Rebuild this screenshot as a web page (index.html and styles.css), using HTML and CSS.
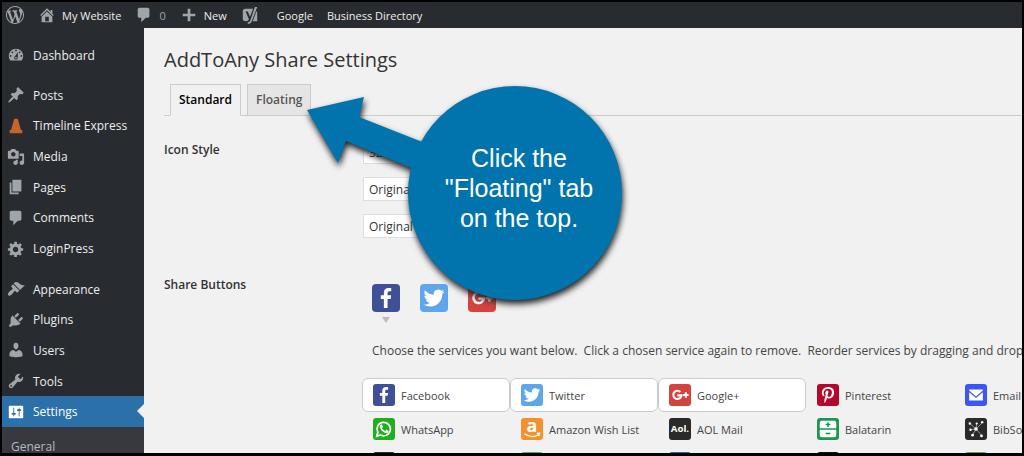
FILE: index.html
```html
<!DOCTYPE html>
<html lang="en">
<head>
  <meta charset="UTF-8" />
  <meta name="viewport" content="width=device-width, initial-scale=1.0" />
  <title>AddToAny Share Settings</title>
  <link rel="stylesheet" href="styles.css">
</head>
<body>
  <svg class="defs" aria-hidden="true">
    <symbol id="comment" viewBox="0 0 20 20"><path d="M5 2h9c1.1 0 2 .9 2 2v7c0 1.1-.9 2-2 2h-2l-5 5v-5H5c-1.1 0-2-.9-2-2V4c0-1.1.9-2 2-2z"/></symbol>
    <symbol id="facebook" viewBox="0 0 32 32"><path fill="#fff" d="M17.78 27.5V17.008h3.522l.527-4.09h-4.05v-2.61c0-1.182.33-1.99 2.023-1.99h2.166V4.66c-.375-.05-1.66-.16-3.155-.16-3.123 0-5.26 1.905-5.26 5.405v3.016h-3.53v4.09h3.53V27.5h4.223z"/></symbol>
    <symbol id="twitter" viewBox="0 0 32 32"><path fill="#fff" d="M28 8.557a9.913 9.913 0 01-2.828.775 4.93 4.93 0 002.166-2.725 9.738 9.738 0 01-3.13 1.194 4.92 4.92 0 00-3.593-1.55 4.924 4.924 0 00-4.794 6.049c-4.09-.21-7.72-2.17-10.15-5.15a4.942 4.942 0 00-.665 2.477c0 1.71.87 3.214 2.19 4.1a4.968 4.968 0 01-2.23-.616v.06c0 2.39 1.7 4.38 3.952 4.83-.414.115-.85.174-1.297.174-.318 0-.626-.03-.928-.086a4.935 4.935 0 004.6 3.42 9.893 9.893 0 01-6.114 2.107c-.398 0-.79-.023-1.175-.068a13.953 13.953 0 007.55 2.213c9.056 0 14.01-7.507 14.01-14.013 0-.213-.005-.426-.015-.637.96-.695 1.795-1.56 2.455-2.55z"/></symbol>
    <symbol id="gplus" viewBox="0 0 32 32"><path fill="none" stroke="#fff" stroke-width="3" d="M16.5 11.5a6 6 0 1 0 1.7 5H12M24.5 12v8M20.5 16h8"/></symbol>
  </svg>

  <header class="adminbar">
    <a href="#" class="bar-item logo" aria-label="WordPress"><svg viewBox="0 0 20 20"><path d="M20 10c0-5.51-4.49-10-10-10C4.48 0 0 4.49 0 10c0 5.52 4.48 10 10 10 5.51 0 10-4.48 10-10zM7.78 15.37L4.37 6.22c.55-.02 1.17-.08 1.17-.08.5-.06.44-1.13-.06-1.11 0 0-1.45.11-2.37.11-.18 0-.37 0-.58-.01C4.12 2.69 6.87 1.11 10 1.11c2.33 0 4.45.87 6.05 2.34-.68-.11-1.65.39-1.65 1.58 0 .74.45 1.36.9 2.1.35.61.55 1.36.55 2.46 0 1.49-1.4 5-1.4 5l-3.03-8.37c.54-.02.82-.17.82-.17.5-.05.44-1.25-.06-1.22 0 0-1.44.12-2.38.12-.87 0-2.33-.12-2.33-.12-.5-.03-.56 1.2-.06 1.22l.92.08 1.26 3.41zM17.41 10c.24-.64.74-1.87.43-4.25.7 1.29 1.05 2.71 1.05 4.25 0 3.29-1.73 6.24-4.4 7.78.97-2.59 1.94-5.2 2.92-7.78zM6.1 18.09C3.12 16.65 1.11 13.53 1.11 10c0-1.3.23-2.48.72-3.59C3.25 10.3 4.67 14.2 6.1 18.09zm4.03-6.63l2.58 6.98c-.86.29-1.76.45-2.71.45-.79 0-1.57-.11-2.29-.33.81-2.38 1.62-4.74 2.42-7.1z"/></svg></a>
    <a href="#" class="bar-item site"><svg viewBox="0 0 20 20"><path d="M16 8.5l1.53 1.53-1.06 1.06L10 4.6l-6.47 6.49-1.06-1.06L10 2.5l4 4v-2h2v4zm-6-2.46l6 5.99V18H4v-5.97zM12 17v-5H8v5h4z"/></svg>My Website</a>
    <a href="#" class="bar-item count"><svg><use href="#comment"/></svg>0</a>
    <a href="#" class="bar-item new"><svg viewBox="0 0 20 20"><path d="M8.5 3h3v5.5H17v3h-5.500V17h-3v-5.500H3v-3h5.500z"/></svg>New</a>
    <a href="#" class="bar-item yoast" aria-label="SEO"><svg viewBox="0 0 20 20"><path d="M5 3h8.500L10 12 7.500 6H5l3.800 8.500C8.300 16 7.500 17 5.500 17H5a3 3 0 0 1-3-3V6a3 3 0 0 1 3-3zM15.500 1H18L12 17c-.8 1.900-2.200 3-4.500 3v-2c1.500 0 2.200-.6 2.800-2zM17.300 5.500c.5.500.7 1.200.7 2V17h-5z"/></svg></a>
    <a href="#" class="bar-item">Google</a>
    <a href="#" class="bar-item">Business Directory</a>
  </header>

  <div class="wrap">
    <nav class="menu">
      <ul>
        <li><a href="#"><svg viewBox="0 0 20 20"><path fill-rule="evenodd" d="M3.76 16h12.48c1.100-1.370 1.760-3.110 1.760-5 0-4.420-3.580-8-8-8s-8 3.580-8 8c0 1.890.66 3.630 1.760 5zM10 4c.55 0 1 .45 1 1s-.45 1-1 1-1-.45-1-1 .45-1 1-1zM6 6c.55 0 1 .45 1 1s-.45 1-1 1-1-.45-1-1 .45-1 1-1zm8 0c.55 0 1 .45 1 1s-.45 1-1 1-1-.45-1-1 .45-1 1-1zm-5.370 5.550L12 7v6c0 1.100-.9 2-2 2s-2-.9-2-2c0-.57.24-1.080.63-1.450zM4 10c.55 0 1 .45 1 1s-.45 1-1 1-1-.45-1-1 .45-1 1-1zm12 0c.55 0 1 .45 1 1s-.45 1-1 1-1-.45-1-1 .45-1 1-1zm-5 3c0-.55-.45-1-1-1s-1 .45-1 1 .45 1 1 1 1-.45 1-1z"/></svg>Dashboard</a></li>
      </ul>
      <ul class="content-group">
        <li><a href="#"><svg viewBox="0 0 20 20"><path d="M10.440 3.020l1.820-1.820 6.360 6.350-1.830 1.820c-1.050-.68-2.480-.57-3.410.36l-.75.75c-.92.93-1.040 2.350-.35 3.410l-1.830 1.820-2.410-2.410-2.800 2.790c-.42.42-3.380 2.710-3.800 2.290s1.860-3.390 2.280-3.810l2.790-2.790L4.100 9.360l1.830-1.820c1.050.69 2.480.57 3.400-.36l.75-.75c.93-.92 1.050-2.350.36-3.410z"/></svg>Posts</a></li>
        <li><a href="#"><svg viewBox="0 0 20 20"><path fill="#c4662c" d="M8 2h4l3.500 12.500H17V18H3v-3.500h1.500z"/></svg>Timeline Express</a></li>
        <li><a href="#"><svg viewBox="0 0 20 20"><path fill-rule="evenodd" d="M13 11V4c0-.55-.45-1-1-1h-1.670L9 1H5L3.670 3H2c-.55 0-1 .45-1 1v7c0 .55.45 1 1 1h10c.55 0 1-.45 1-1zM7 4.500c1.380 0 2.500 1.120 2.500 2.500S8.380 9.500 7 9.500 4.500 8.380 4.500 7 5.620 4.500 7 4.500zM14 6h5v10.500c0 1.380-1.120 2.500-2.500 2.500S14 17.880 14 16.500s1.120-2.500 2.500-2.500c.17 0 .34.02.5.05V9h-3V6zm-4 8.050V13h2v3.500c0 1.380-1.120 2.500-2.500 2.500S7 17.880 7 16.500 8.120 14 9.500 14c.17 0 .34.02.5.05z"/></svg>Media</a></li>
        <li><a href="#"><svg viewBox="0 0 20 20"><path d="M6 15V2h10v13H6zm-1 1h8v2H3V5h2v11z"/></svg>Pages</a></li>
        <li><a href="#"><svg><use href="#comment"/></svg>Comments</a></li>
        <li><a href="#"><svg viewBox="0 0 20 20"><path fill-rule="evenodd" d="M18 12h-2.180c-.17.7-.44 1.350-.81 1.930l1.540 1.540-2.100 2.100-1.540-1.540c-.58.36-1.230.63-1.910.79V19H8v-2.180c-.68-.16-1.330-.43-1.910-.79l-1.540 1.540-2.120-2.120 1.540-1.540c-.36-.58-.63-1.230-.79-1.910H1V9.030h2.170c.16-.7.44-1.350.8-1.940L2.430 5.550l2.100-2.100 1.540 1.540c.58-.37 1.240-.64 1.930-.81V2h3v2.180c.68.16 1.330.43 1.910.79l1.540-1.540 2.120 2.120-1.540 1.540c.36.59.64 1.240.8 1.940H18V12zm-8.500 1.500c1.660 0 3-1.340 3-3s-1.340-3-3-3-3 1.340-3 3 1.340 3 3 3z"/></svg>LoginPress</a></li>
      </ul>
      <ul class="admin-group">
        <li><a href="#"><svg viewBox="0 0 20 20"><path d="M14.480 11.060L7.410 3.990l1.500-1.500c.5-.56 2.300-.47 3.510.32 1.210.8 1.430 1.280 2.910 2.100 1.180.64 2.450 1.260 4.450.85zm-.71.71L6.700 4.700 4.930 6.470c-.39.39-.39 1.020 0 1.410l1.060 1.060c.39.39.39 1.030 0 1.420-.6.6-1.430 1.110-2.210 1.690-.35.26-.7.53-1.010.84C1.430 14.230.4 16.080 1.400 17.070c.99 1 2.840-.03 4.180-1.360.31-.31.58-.66.85-1.020.57-.78 1.080-1.610 1.690-2.210.39-.39 1.020-.39 1.410 0l1.060 1.060c.39.39 1.020.39 1.410 0z"/></svg>Appearance</a></li>
        <li><a href="#"><svg viewBox="0 0 20 20"><path d="M13.110 4.360L9.870 7.600 8 5.730l3.240-3.240c.35-.34 1.050-.2 1.560.32.52.51.66 1.210.31 1.550zm-8 1.770l.91-1.120 9.010 9.010-1.190.84c-.71.71-2.630 1.160-3.820 1.160H6.140L4.900 17.260c-.59.59-1.540.59-2.120 0-.59-.58-.59-1.530 0-2.120l1.240-1.240v-3.880c0-1.130.4-3.190 1.090-3.890zm7.260 3.970l3.240-3.240c.34-.35 1.040-.21 1.550.31.52.51.66 1.210.31 1.550l-3.240 3.250z"/></svg>Plugins</a></li>
        <li><a href="#"><svg viewBox="0 0 20 20"><path d="M10 9.250c-2.270 0-2.730-3.440-2.730-3.440C7 4.020 7.820 2 9.970 2c2.160 0 2.980 2.020 2.710 3.810 0 0-.41 3.440-2.680 3.440zm0 2.570L12.720 10c2.390 0 4.520 2.330 4.520 4.530v2.490s-3.650 1.130-7.240 1.130c-3.650 0-7.240-1.130-7.240-1.130v-2.490c0-2.250 1.940-4.480 4.470-4.480z"/></svg>Users</a></li>
        <li><a href="#"><svg viewBox="0 0 20 20"><path d="M16.680 9.770c-1.340 1.340-3.300 1.670-4.950.99l-5.410 6.520c-.99.99-2.590.99-3.580 0s-.99-2.590 0-3.570l6.520-5.420c-.68-1.650-.35-3.610.99-4.950 1.280-1.280 3.120-1.620 4.720-1.060l-2.890 2.890 2.820 2.820 2.860-2.870c.53 1.580.18 3.390-1.080 4.650zM3.810 16.210c.4.39 1.040.39 1.430 0 .4-.4.4-1.040 0-1.430-.39-.4-1.030-.4-1.430 0-.39.39-.39 1.030 0 1.430z"/></svg>Tools</a></li>
        <li><a href="#" class="current"><svg viewBox="0 0 20 20"><path fill-rule="evenodd" d="M18 16V4c0-.55-.45-1-1-1H3c-.55 0-1 .45-1 1v12c0 .55.45 1 1 1h14c.55 0 1-.45 1-1zM8 11h1c.55 0 1 .45 1 1s-.45 1-1 1H8v1.500c0 .28-.22.5-.5.5s-.5-.22-.5-.5V13H6c-.55 0-1-.45-1-1s.45-1 1-1h1V5.500c0-.28.22-.5.5-.5s.5.22.5.5V11zm5-2h-1c-.55 0-1-.45-1-1s.45-1 1-1h1V5.500c0-.28.22-.5.5-.5s.5.22.5.5V7h1c.55 0 1 .45 1 1s-.45 1-1 1h-1v5.500c0 .28-.22.5-.5.5s-.5-.22-.5-.5V9z"/></svg>Settings</a></li>
      </ul>
      <a href="#" class="submenu">General</a>
    </nav>

    <main class="content">
      <h1>AddToAny Share Settings</h1>
      <nav class="tabs">
        <a href="#" class="tab active">Standard</a>
        <a href="#" class="tab">Floating</a>
      </nav>

      <form class="settings">
        <h2>Icon Style</h2>
        <div class="fields">
          <input type="text" class="field" value="32" aria-label="Icon size">
          <select class="field" aria-label="Background"><option>Original</option></select>
          <select class="field" aria-label="Foreground"><option>Original</option></select>
        </div>

        <h2>Share Buttons</h2>
        <div class="share">
          <div class="preview">
            <button type="button" class="share-icon facebook" aria-label="Facebook"><svg><use href="#facebook"/></svg></button>
            <button type="button" class="share-icon twitter" aria-label="Twitter"><svg><use href="#twitter"/></svg></button>
            <button type="button" class="share-icon gplus" aria-label="Google+"><svg><use href="#gplus"/></svg></button>
          </div>
          <span class="arrow-down"></span>
          <p class="help">Choose the services you want below. &nbsp;Click a chosen service again to remove. &nbsp;Reorder services by dragging and drop</p>

          <div class="services">
            <button type="button" class="service chosen"><svg class="facebook"><use href="#facebook"/></svg>Facebook</button>
            <button type="button" class="service chosen"><svg class="twitter"><use href="#twitter"/></svg>Twitter</button>
            <button type="button" class="service chosen"><svg class="gplus"><use href="#gplus"/></svg>Google+</button>
            <button type="button" class="service"><svg class="pinterest" viewBox="0 0 32 32"><path fill="#fff" d="M16.539 4.500c-6.277 0-9.442 4.500-9.442 8.253 0 2.272.86 4.293 2.705 5.046.303.125.574.005.662-.33.061-.231.205-.816.27-1.060.088-.331.053-.447-.191-.736-.532-.627-.873-1.439-.873-2.591 0-3.338 2.498-6.327 6.505-6.327 3.548 0 5.497 2.168 5.497 5.062 0 3.810-1.686 7.025-4.188 7.025-1.382 0-2.416-1.142-2.085-2.545.397-1.674 1.166-3.480 1.166-4.689 0-1.081-.581-1.983-1.782-1.983-1.413 0-2.548 1.462-2.548 3.419 0 1.247.421 2.091.421 2.091l-1.699 7.199c-.505 2.137-.076 4.755-.039 5.019.021.158.223.196.314.077.13-.17 1.813-2.247 2.384-4.324.162-.587.929-3.631.929-3.631.46.876 1.801 1.646 3.227 1.646 4.247 0 7.128-3.871 7.128-9.053.003-3.918-3.317-7.568-8.361-7.568z"/></svg>Pinterest</button>
            <button type="button" class="service"><svg class="email" viewBox="0 0 32 32"><path fill="#fff" d="M6 9.500 16 18l10-8.500V8H6zM6 12v12h20V12l-10 8.500z"/></svg>Email</button>

            <button type="button" class="service"><svg class="whatsapp" viewBox="0 0 32 32"><path fill="none" stroke="#fff" stroke-width="2.400" d="M5.500 26.500 7 20.800a9.800 9.800 0 1 1 3.900 3.900z"/><path fill="#fff" d="M12 9.500c-.7 0-2 1-2 3 0 4.500 5.500 9.500 9.500 9.500 2 0 3.500-1.500 3.300-3l-3.300-1.800-1.800 1.800c-2-.8-3.700-2.500-4.500-4.400l1.300-1.600-1.300-3.400z"/></svg>WhatsApp</button>
            <button type="button" class="service"><svg class="amazon" viewBox="0 0 32 32"><text x="16" y="20" class="mark amazon-mark">a</text><path fill="none" stroke="#fff" stroke-width="2" d="M5 23c7 5 15 5 21 1M23 22.500l4-.3-1 4"/></svg>Amazon Wish List</button>
            <button type="button" class="service"><svg class="aol" viewBox="0 0 32 32"><text x="16" y="21" class="mark aol-mark">Aol.</text></svg>AOL Mail</button>
            <button type="button" class="service"><svg class="balatarin" viewBox="0 0 32 32"><path fill="#fff" d="M7 4h18a3 3 0 0 1 3 3v8H4V7a3 3 0 0 1 3-3zM4 17h24v8a3 3 0 0 1-3 3H7a3 3 0 0 1-3-3z"/><path fill="none" stroke="#079948" stroke-width="2" d="M16 6v7M12.500 9.500h7M12.500 22.500h7"/></svg>Balatarin</button>
            <button type="button" class="service"><svg class="bibsonomy" viewBox="0 0 32 32"><path fill="none" stroke="#fff" stroke-width=".7" d="M7 8l9 8 9-9M16 16l-5 9M16 16l8 9M8 17l8-1M17 8l-1 8"/><g fill="#fff"><circle cx="7" cy="8" r="1.800"/><circle cx="17" cy="8" r="1.600"/><circle cx="25" cy="6" r="1.800"/><circle cx="8" cy="17" r="1.800"/><circle cx="16" cy="16" r="2.600"/><circle cx="11" cy="25" r="2"/><circle cx="24" cy="26" r="2"/></g></svg>BibSonomy</button>

            <span class="service"><svg class="aol"></svg></span>
            <span class="service"><svg class="green"></svg></span>
            <span class="service"><svg class="blue"></svg></span>
            <span class="service"><svg class="black"></svg></span>
            <span class="service"><svg class="green"></svg></span>
          </div>
        </div>
      </form>
    </main>
  </div>

  <aside class="callout">
    <svg viewBox="0 0 320 220"><circle cx="210" cy="109" r="107"/><path d="M2 26 59 13 54 33 130 63 118 89 41 57 33 79z"/></svg>
    <p>Click the<br>"Floating" tab<br>on the top.</p>
  </aside>
</body>
</html>
```
FILE: styles.css
```css
* {
  box-sizing: border-box;
}
body {
  margin: 0;
  height: 100vh;
  display: flex;
  flex-direction: column;
  overflow: hidden;
  border: 2px solid #000;
  border-bottom-width: 3px;
  background: #f1f1f1;
  color: #444;
  font-family: "Open Sans", "Noto Sans", sans-serif;
  font-size: 12px;
}
a {
  color: inherit;
  text-decoration: none;
}
ul {
  list-style: none;
  margin: 0;
  padding: 0;
}
.defs {
  position: absolute;
  width: 0;
  height: 0;
}

/* admin bar */
.adminbar {
  display: flex;
  flex: none;
  align-items: center;
  height: 26px;
  padding-left: 4px;
  background: #282b30;
  color: #eee;
  font-size: 11px;
}
.bar-item {
  display: flex;
  align-items: center;
  gap: 6px;
  margin-right: 14px;
}
.bar-item svg {
  width: 18px;
  height: 18px;
  fill: #a0a5aa;
}
.count {
  color: #a0a5aa;
}
.yoast {
  margin-right: 18px;
}

/* left menu */
.wrap {
  display: flex;
  flex: 1;
  min-height: 0;
}
.menu {
  flex: none;
  width: 142px;
  padding-top: 12px;
  overflow: hidden;
  background: #282b30;
  color: #eee;
}
.menu ul {
  display: grid;
  grid-auto-rows: 1fr;
  height: 30px;
  margin-bottom: 10px;
}
.menu .content-group {
  height: 184px;
}
.menu .admin-group {
  height: 153px;
  margin-bottom: 0;
}
.menu li a {
  display: flex;
  align-items: center;
  gap: 8px;
  height: 100%;
  padding-left: 5px;
}
.menu svg {
  width: 18px;
  height: 18px;
  fill: #a0a5aa;
}
.menu .current {
  position: relative;
  background: #2b70a9;
  color: #fff;
}
.menu .current svg {
  fill: #fff;
}
.current::after {
  content: "";
  position: absolute;
  right: 0;
  top: 8px;
  border: 7px solid transparent;
  border-left-width: 0;
  border-right-color: #f1f1f1;
}
.submenu {
  display: block;
  padding: 12px 9px;
  line-height: 16px;
  background: #37393f;
  color: #b4b9be;
}

/* page */
.content {
  flex: 1;
  min-width: 0;
  padding: 18px 0 0 20px;
  overflow: hidden;
}
h1 {
  margin: 0;
  font-size: 20px;
  font-weight: 400;
  line-height: 28px;
  color: #333;
}
.tabs {
  display: flex;
  gap: 6px;
  margin-top: 10px;
  padding-left: 6px;
  border-bottom: 1px solid #ccc;
}
.tab {
  padding: 0 8px;
  margin-bottom: -1px;
  border: 1px solid #ccc;
  background: #e5e5e5;
  color: #555;
  font-weight: 600;
  line-height: 30px;
}
.tab.active {
  border-bottom-color: #f1f1f1;
  background: #f1f1f1;
  color: #000;
}
.settings {
  display: grid;
  grid-template-columns: 198px 1fr;
  padding-top: 24px;
}
h2 {
  margin: 0;
  font-size: 12px;
  font-weight: 600;
  line-height: 20px;
  color: #333;
}
.fields {
  display: flex;
  flex-direction: column;
  align-items: flex-start;
  gap: 13px;
  height: 135px;
  padding-left: 1px;
}
.field {
  width: 100px;
  height: 24px;
  padding: 0 5px;
  border: 1px solid #ddd;
  background: #fff;
  color: #333;
  font: inherit;
  appearance: none;
}
.preview {
  display: flex;
  gap: 20px;
  padding: 9px 10px 0;
}
.share-icon {
  width: 28px;
  height: 28px;
  padding: 0;
  border: 0;
  border-radius: 4px;
}
.share-icon svg {
  display: block;
  width: 28px;
  height: 28px;
}
.arrow-down {
  display: block;
  width: 8px;
  margin: 5px 0 0 20px;
  border: 4px solid transparent;
  border-top: 6px solid #bbb;
  border-bottom: 0;
}
.help {
  margin: 18px 0 17px 10px;
  line-height: 20px;
  white-space: nowrap;
}
.services {
  display: grid;
  grid-template-columns: repeat(5, 148px);
}
.service {
  display: flex;
  align-items: center;
  gap: 6px;
  height: 34px;
  padding: 0 10px;
  border: 1px solid transparent;
  border-radius: 6px;
  background: none;
  color: #444;
  font: inherit;
  font-size: 11px;
  white-space: nowrap;
}
.service.chosen {
  border-color: #ccc;
  background: #fff;
}
.service svg {
  flex: none;
  width: 22px;
  height: 22px;
  border-radius: 3px;
}
.facebook { background: #3f5096; }
.twitter { background: #5ea6ec; }
.gplus { background: #d5433f; }
.pinterest { background: #b5062b; }
.email { background: #3d55f5; }
.whatsapp { background: #1fae1c; }
.amazon { background: #f3922c; }
.aol { background: #2a2a2a; }
.balatarin { background: #1f9650; }
.bibsonomy { background: #2a2a2a; }
.green { background: #6fa52c; }
.blue { background: #1f6cb0; }
.black { background: #111; }
.mark {
  fill: #fff;
  font-weight: 700;
  text-anchor: middle;
}
.amazon-mark {
  font-size: 26px;
}
.aol-mark {
  font-size: 14px;
}

/* tooltip drawn over the page */
.callout {
  position: absolute;
  left: 305px;
  top: 84px;
  width: 320px;
}
.callout svg {
  display: block;
  overflow: visible;
  fill: #0274ad;
  filter: drop-shadow(1px 4px 3px #222);
}
.callout p {
  position: absolute;
  inset: 59px 0 auto 108px;
  margin: 0;
  color: #fff;
  font: 25px/30px "Liberation Sans", Arial, sans-serif;
  text-align: center;
}
```
